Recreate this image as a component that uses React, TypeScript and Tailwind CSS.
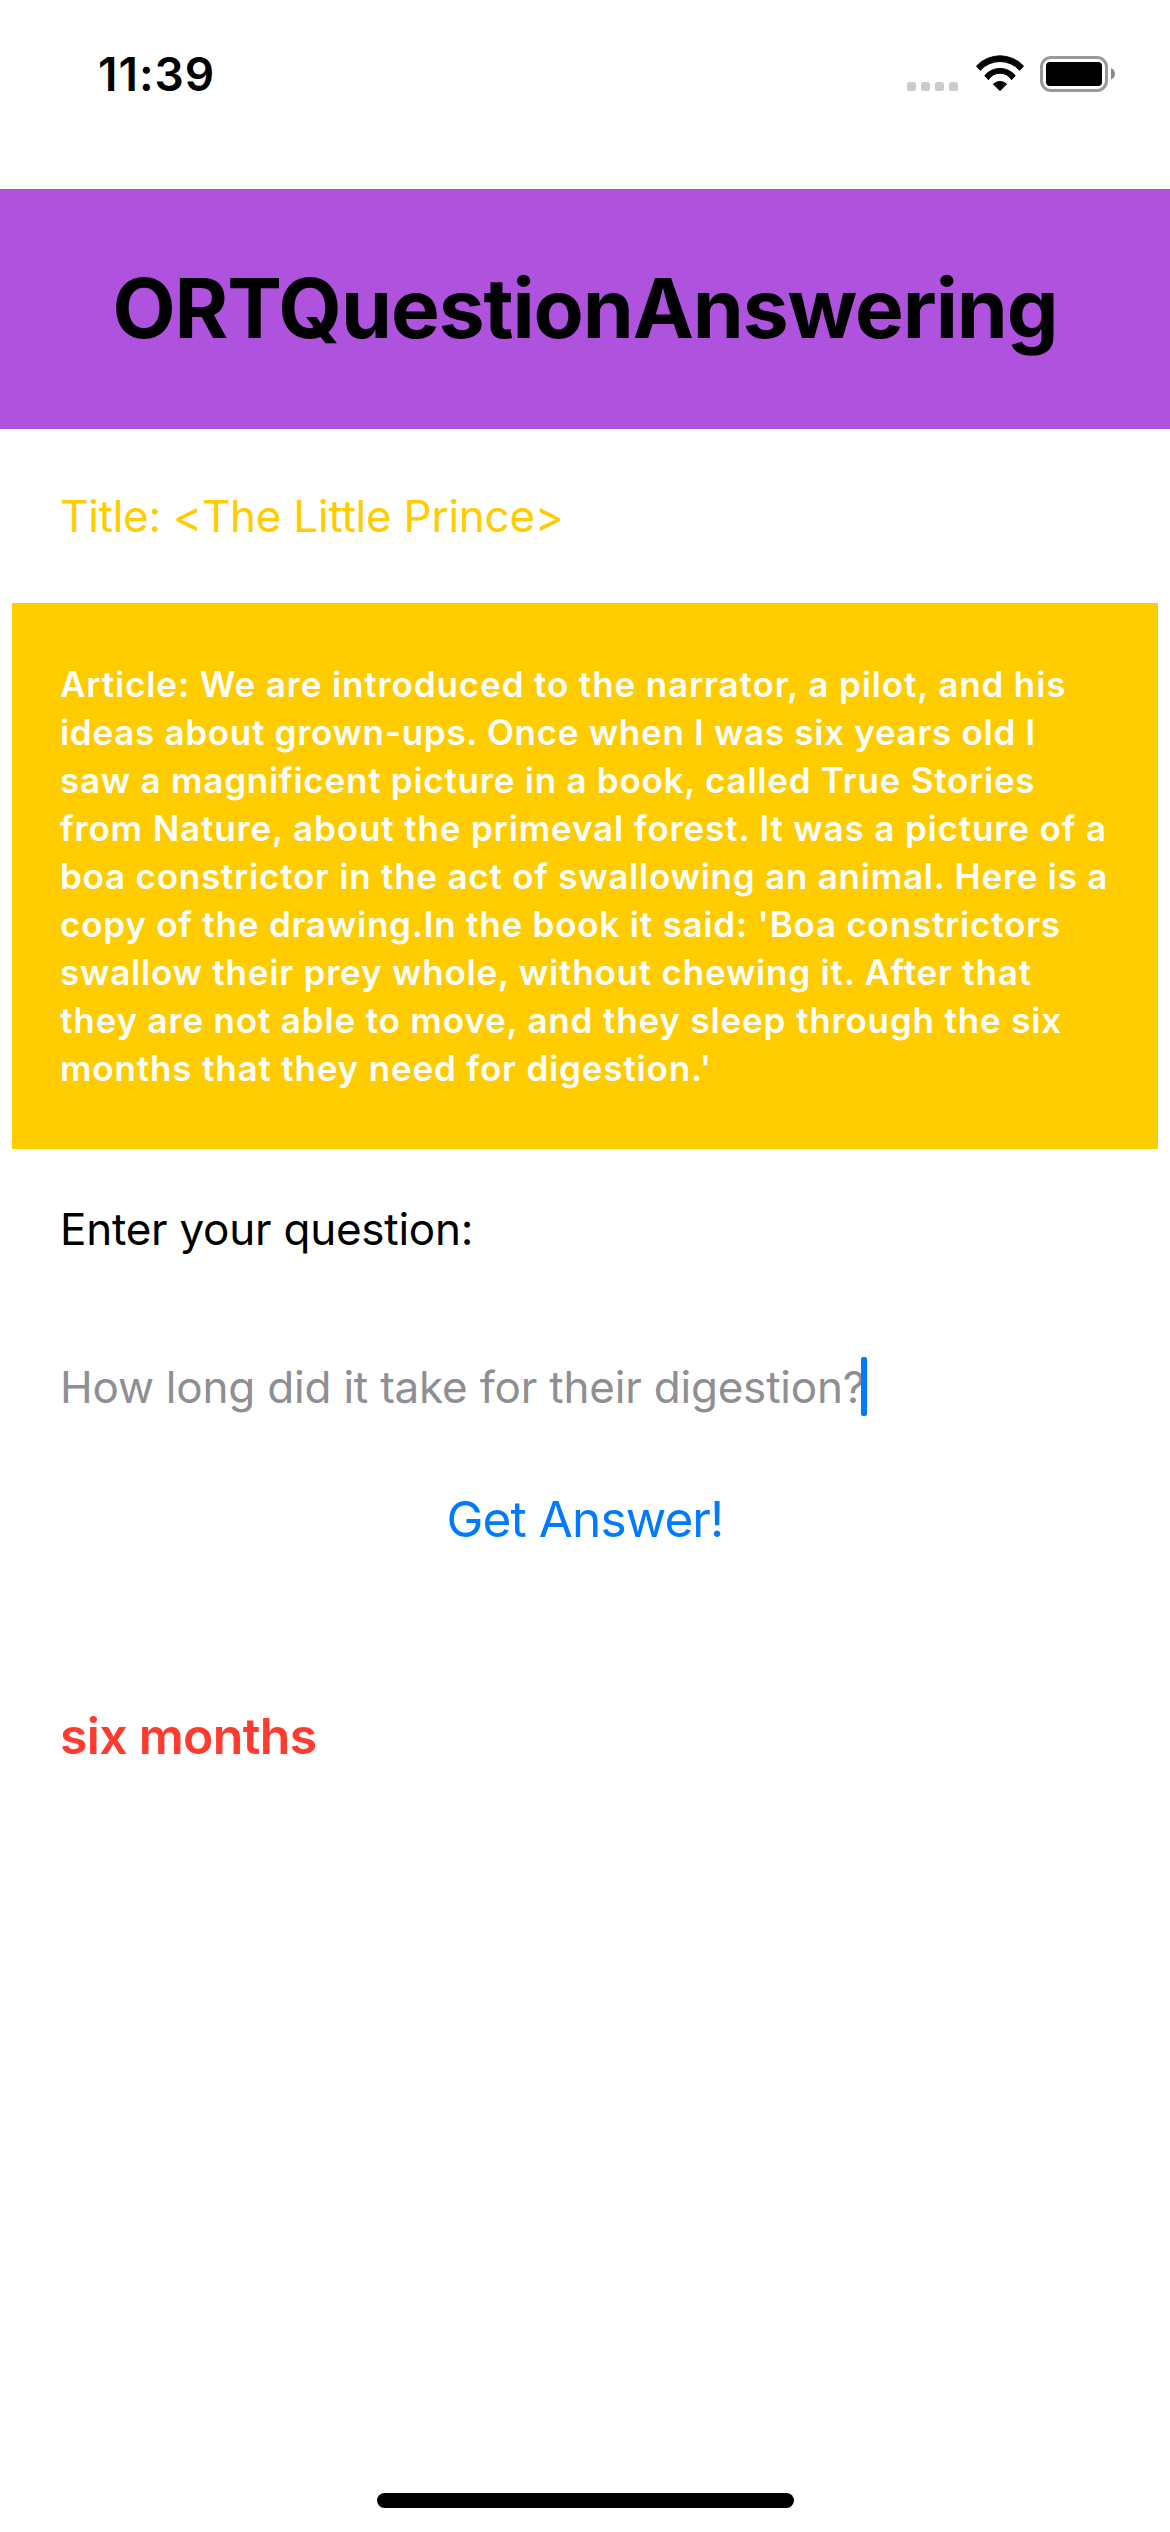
import React from "react";

const article: { text: string; tracking: string }[] = [
  { text: "Article: We are introduced to the narrator, a pilot, and his", tracking: "tracking-[0.88px]" },
  { text: "ideas about grown-ups. Once when I was six years old I", tracking: "tracking-[0.71px]" },
  { text: "saw a magnificent picture in a book, called True Stories", tracking: "tracking-[0.76px]" },
  { text: "from Nature, about the primeval forest. It was a picture of a", tracking: "tracking-[0.86px]" },
  { text: "boa constrictor in the act of swallowing an animal. Here is a", tracking: "tracking-[0.77px]" },
  { text: "copy of the drawing.In the book it said: 'Boa constrictors", tracking: "tracking-[0.79px]" },
  { text: "swallow their prey whole, without chewing it. After that", tracking: "tracking-[0.8px]" },
  { text: "they are not able to move, and they sleep through the six", tracking: "tracking-[0.84px]" },
  { text: "months that they need for digestion.'", tracking: "tracking-[0.83px]" },
];

function CellularDots() {
  return (
    <svg width="51" height="38" viewBox="0 0 51 38" fill="#cbcbcb">
      <rect x="0" y="28" width="9" height="9" rx="2.6" />
      <rect x="14" y="28" width="9" height="9" rx="2.6" />
      <rect x="28" y="28" width="9" height="9" rx="2.6" />
      <rect x="42" y="28" width="9" height="9" rx="2.6" />
    </svg>
  );
}

function WifiIcon() {
  return (
    <svg width="50" height="38" viewBox="0 0 50 38" stroke="#000" strokeWidth="1" strokeLinejoin="round">
      <path d="M1.5 12A32.2 32.2 0 0 1 48.5 12L44.7 16.3A26.5 26.5 0 0 0 5.3 16.3Z" />
      <path d="M9.8 21.6A19.7 19.7 0 0 1 40.2 21.6L36.6 25.7A13.6 13.6 0 0 0 13.4 25.7Z" />
      <path d="M18.4 30.1A9.6 9.6 0 0 1 31.6 30.1L25 36.6Z" />
    </svg>
  );
}

function BatteryIcon() {
  return (
    <svg width="76" height="38" viewBox="0 0 76 38">
      <rect x="1.5" y="3.5" width="65" height="33" rx="9.5" fill="none" stroke="#999" strokeWidth="3" />
      <rect x="6" y="8" width="56" height="24" rx="4" fill="#000" />
      <path d="M71 14.2Q75 16.2 75 20T71 25.4Z" fill="#8a8a8a" />
    </svg>
  );
}

export default function App() {
  return (
    <div className="flex h-[2532px] w-[1170px] flex-col overflow-hidden bg-white font-['Inter',sans-serif] text-black">
      <header className="flex h-[189px] shrink-0 items-start justify-between pl-[98px] pr-[54px] pt-[49px]">
        <span className="text-[46px] font-semibold leading-[50px] tracking-[1px]">11:39</span>
        <div className="flex pt-[5px]">
          <CellularDots />
          <div className="ml-[17px] mr-[15px]">
            <WifiIcon />
          </div>
          <BatteryIcon />
        </div>
      </header>

      <h1 className="flex h-[240px] shrink-0 items-center justify-center bg-[#af52de] text-[82px] font-bold leading-none tracking-[-1.1px]">
        ORTQuestionAnswering
      </h1>

      <main className="flex flex-1 flex-col">
        <p className="h-[174px] px-[60px] pt-[59px] text-[44px] leading-[56px] tracking-[-0.25px] text-[#ffcc00]">
          Title: &lt;The Little Prince&gt;
        </p>

        <section className="mx-3 h-[546px] bg-[#ffcc00] px-12 pt-[57px] text-[35px] font-semibold leading-[48px] text-white">
          {article.map((line) => (
            <p key={line.text} className={`whitespace-nowrap ${line.tracking}`}>
              {line.text}
            </p>
          ))}
        </section>

        <p className="px-[60px] pt-[52px] text-[44px] leading-[56px] tracking-[-0.25px]">Enter your question:</p>

        <div className="mt-[100px] flex h-[59px] items-center pl-[60px]">
          <span className="w-[801px] whitespace-nowrap text-[44px] leading-[60px] tracking-[-0.2px] text-[#8e8e93]">
            How long did it take for their digestion?
          </span>
          <span className="h-[59px] w-[6px] rounded-[2px] bg-[#007aff]" />
        </div>

        <button className="mt-[73px] self-center text-[49.5px] leading-[60px] tracking-[-0.9px] text-[#007aff]">Get Answer!</button>

        <p className="mt-[157px] px-[60px] text-[50px] font-semibold leading-[60px] tracking-[-0.7px] text-[#ff3b30]">six months</p>
      </main>

      <div className="mb-6 h-[15px] w-[417px] shrink-0 self-center rounded-full bg-black" />
    </div>
  );
}
